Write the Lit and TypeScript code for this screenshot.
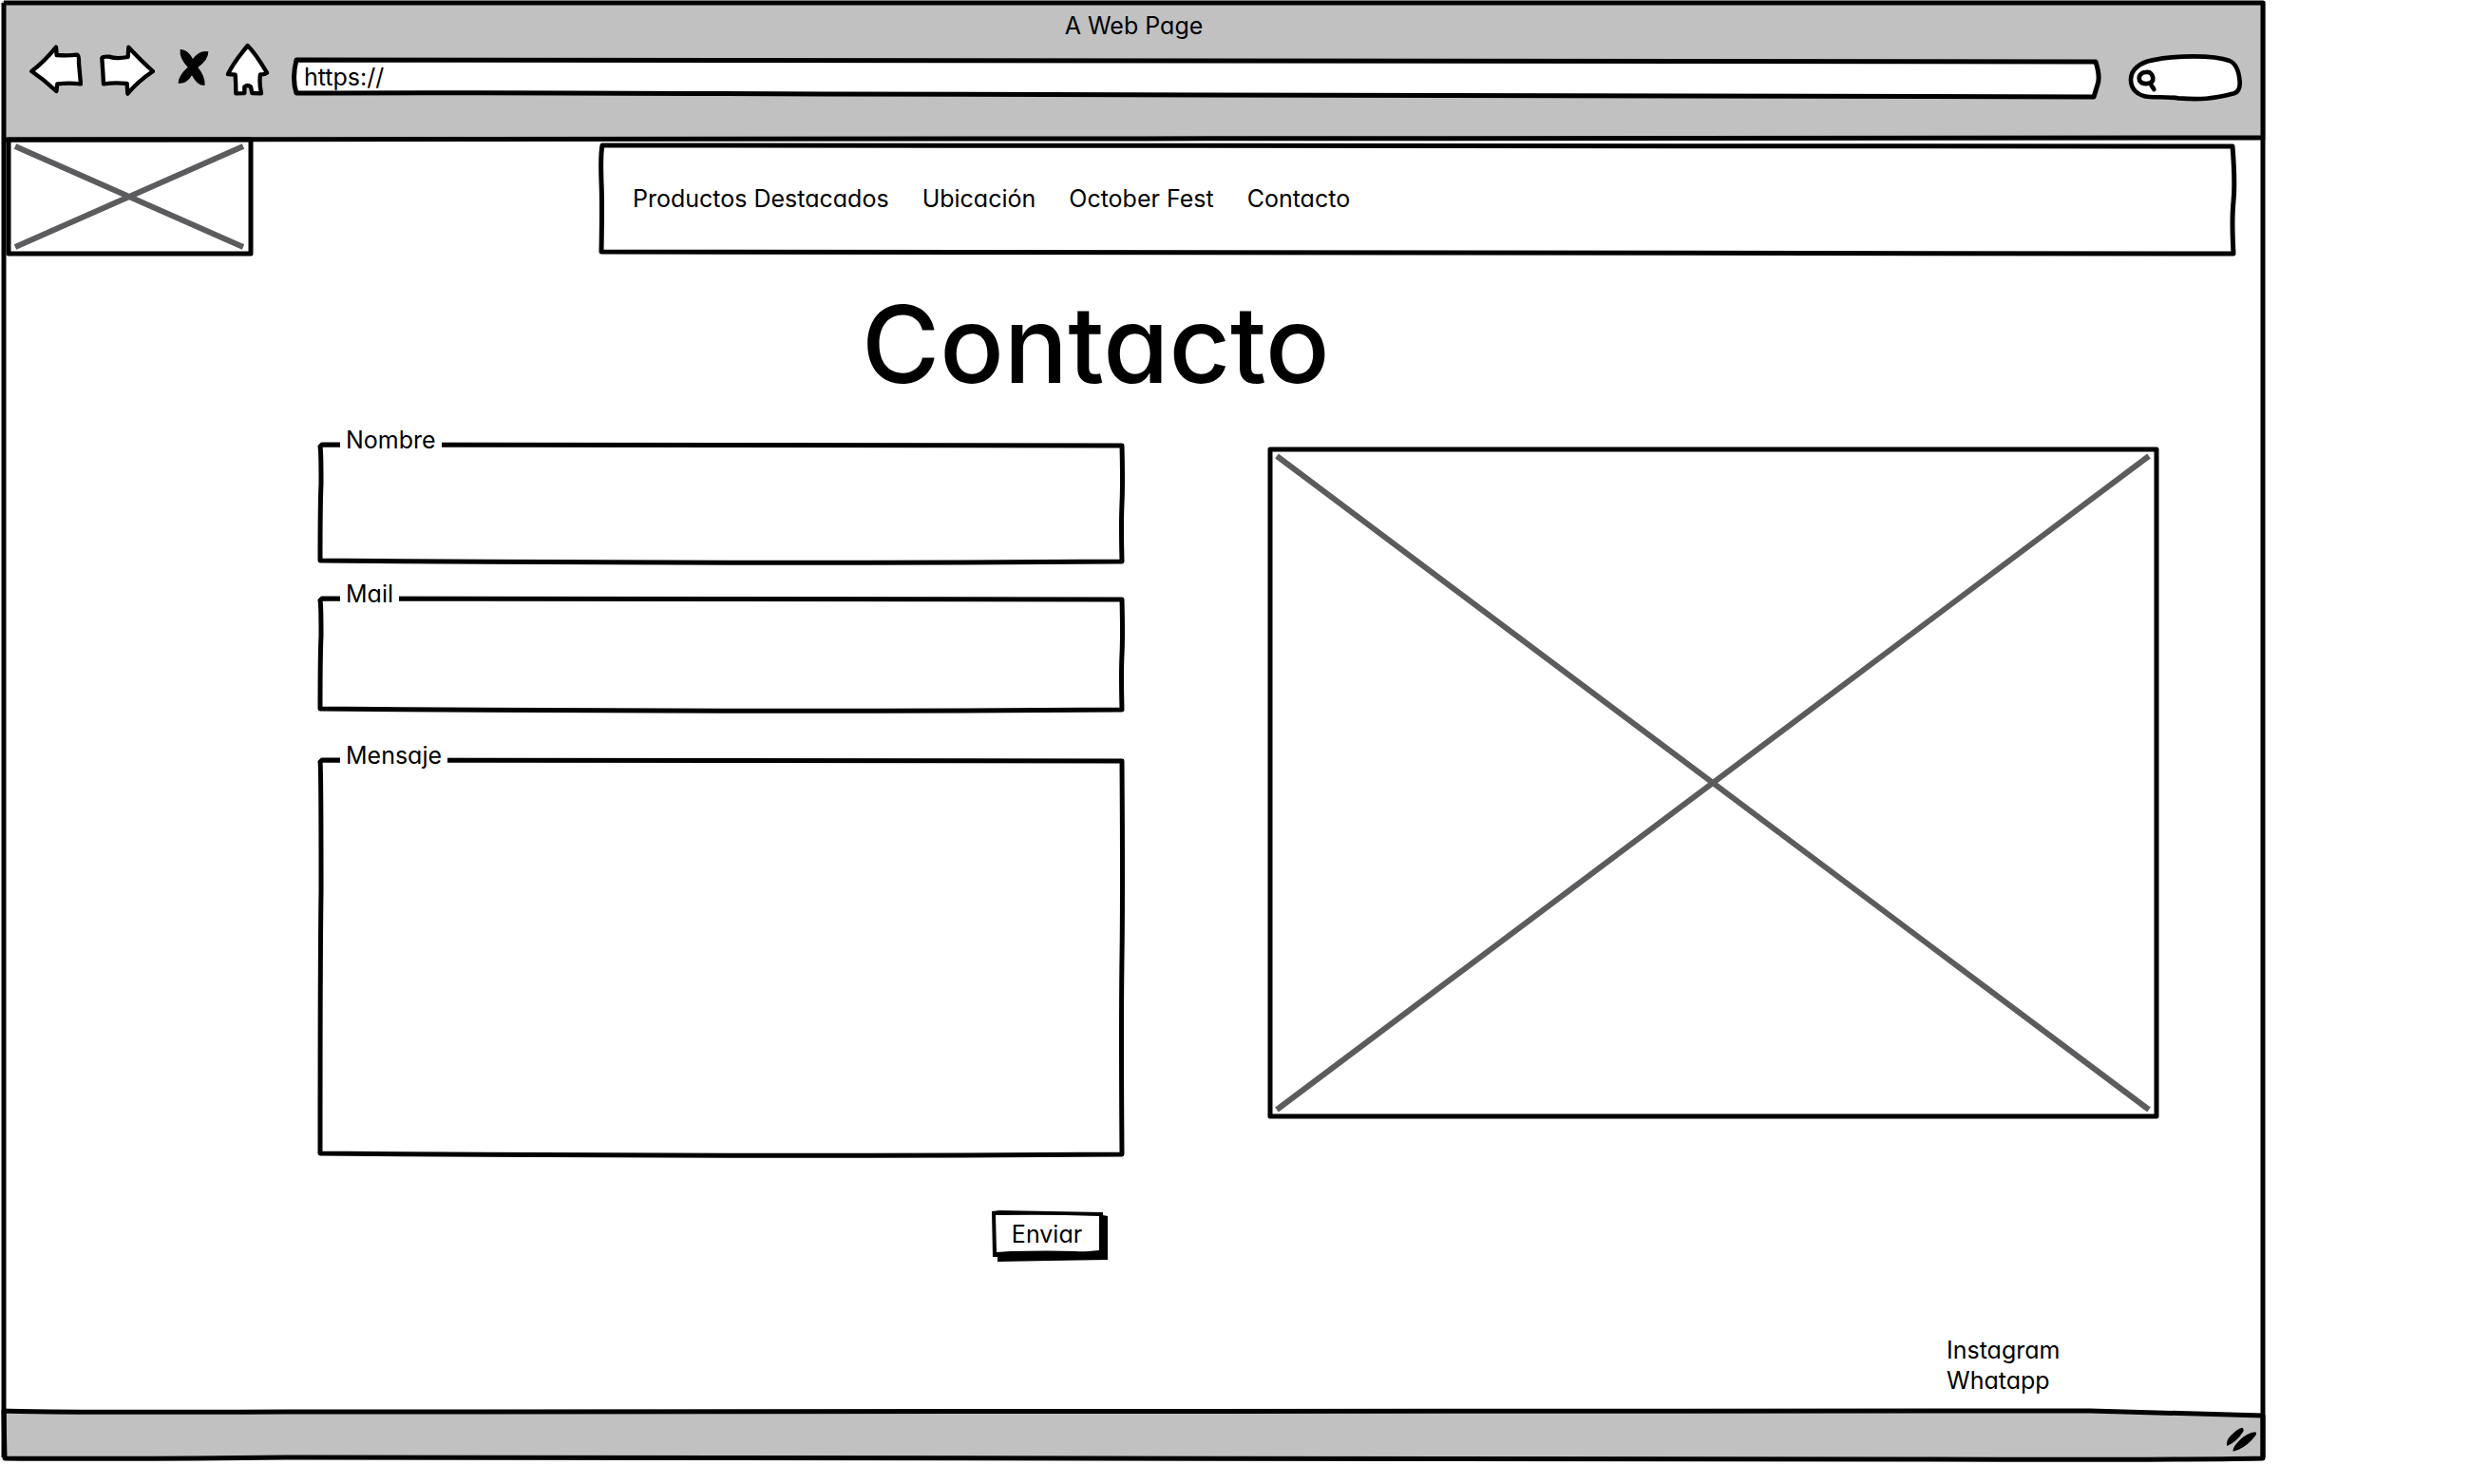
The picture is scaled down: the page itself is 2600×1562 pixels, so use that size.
import { LitElement, html, css, svg } from "lit";
import { customElement } from "lit/decorators.js";

/* Hand-drawn outline that stretches over its positioned parent. */
const ink = (w: number, h: number, d: string, fill = "none") => html`
  <svg class="ink" viewBox="0 0 ${w} ${h}" preserveAspectRatio="none" aria-hidden="true">
    <path d=${d} fill=${fill} vector-effect="non-scaling-stroke"></path>
  </svg>
`;

const fieldOutline = (h: number) =>
  ink(848, h, `M4 1 Q420 0 846 2 Q847 ${h / 3} 846 ${h / 2} T846 ${h - 2} Q420 ${h + 1} 2 ${h - 3} Q2 ${h / 2} 3 ${h / 3} Q3 7 2 3Z`);

const crossed = (w: number, h: number) => html`
  <svg class="ink" viewBox="0 0 ${w} ${h}" preserveAspectRatio="none" aria-hidden="true">
    ${svg`<path class="cross" d="M9 9 L${w - 10} ${h - 9} M${w - 10} 9 L9 ${h - 9}" vector-effect="non-scaling-stroke"></path>
    <path d="M2 2 H${w - 2} V${h - 2} H2Z" fill="none" vector-effect="non-scaling-stroke"></path>`}
  </svg>
`;

@customElement("app-root")
export class AppRoot extends LitElement {
  static styles = css`
    :host {
      display: block;
      background: #fff;
      color: #000;
      font: 400 25px/32px Inter, "Liberation Sans", sans-serif;
      font-feature-settings: "cv11" 1, "ss03" 1;
    }
    * { box-sizing: border-box; }
    .ink {
      position: absolute;
      inset: 0;
      width: 100%;
      height: 100%;
      overflow: visible;
      pointer-events: none;
      stroke: #000;
      stroke-width: 5px;
      stroke-linejoin: round;
    }
    .cross { stroke: #5c5c5e; stroke-width: 6px; }
    .window { position: relative; margin: 1px 215px 24px 2px; }
    .bar {
      background: #c1c1c1;
      height: 146px;
      padding-top: 10px;
      display: flex;
      flex-direction: column;
    }
    .title { text-align: center; margin: 0; font-size: inherit; font-weight: inherit; }
    .tools {
      display: flex;
      align-items: flex-start;
      padding: 4px 23px 0 29px;
    }
    .tool { border: 0; padding: 0; margin: 0; background: none; display: block; height: 54px; }
    .tool svg { display: block; }
    .back { margin-right: 18px; }
    .next { margin-right: 24px; }
    .stop { margin-right: 18px; }
    .home { margin-right: 25px; }
    .address { position: relative; flex: 1; height: 44px; margin: 14px 28px 0 0; }
    .address input, .field input, .field textarea {
      position: relative;
      display: block;
      width: 100%;
      height: 100%;
      border: 0;
      outline: 0;
      background: none;
      font: inherit;
      color: inherit;
      resize: none;
    }
    .address input { padding: 0 12px 4px; }
    .search { position: relative; width: 122px; height: 54px; margin-top: 8px; }
    .search svg { display: block; }
    .search input {
      position: absolute;
      inset: 8px 12px 8px 32px;
      width: 78px;
      border: 0;
      outline: 0;
      background: none;
      font: inherit;
    }
    .top { display: flex; align-items: flex-start; padding: 0 31px 0 5px; gap: 365px; }
    .logo { position: relative; width: 259px; height: 124px; margin-top: -2px; }
    nav {
      position: relative;
      flex: 1;
      height: 117px;
      margin-top: 5px;
      padding: 0 35px 4px;
      display: flex;
      align-items: center;
      gap: 35px;
    }
    nav a, .social a { position: relative; color: inherit; text-decoration: none; }
    h1 {
      margin: 29px 0 0 905px;
      font-size: 112px;
      line-height: 128px;
      font-weight: 500;
    }
    .content {
      display: grid;
      grid-template-columns: 848fr 937fr;
      column-gap: 152px;
      padding: 41px 113px 0 333px;
      align-items: start;
    }
    form { display: flex; flex-direction: column; }
    .field { position: relative; height: 126px; }
    .mail { height: 120px; margin-top: 36px; }
    .message { height: 418px; margin-top: 50px; }
    .field label {
      position: absolute;
      left: 23px;
      top: -20px;
      padding: 0 6px;
      background: #fff;
      z-index: 1;
    }
    .field input, .field textarea { padding: 16px 24px; }
    .send {
      position: relative;
      align-self: flex-end;
      width: 122px;
      height: 54px;
      margin: 57px 17px 0 0;
      padding: 0 6px 4px 0;
      border: 0;
      background: none;
      font: inherit;
      font-feature-settings: inherit;
      color: inherit;
    }
    .send span { position: relative; }
    .photo { position: relative; aspect-ratio: 937 / 706; margin-top: 4px; }
    .social {
      display: flex;
      flex-direction: column;
      align-items: flex-start;
      width: 336px;
      margin: 77px 0 0 auto;
      padding-bottom: 16px;
    }
    .foot { position: relative; height: 52px; }
    .grip { position: absolute; right: 8px; top: 17px; }
  `;

  render() {
    return html`
      <div class="window">
        <header class="bar">
          <p class="title">A Web Page</p>
          <div class="tools">
            <button class="tool back" aria-label="Back">
              <svg width="56" height="54" viewBox="93 141 168 162">
                <path d="M100 225 Q140 195 177 149 L179 174 Q215 177 244 173 Q250 176 249 200 L255 265 Q218 261 181 265 L178 288 Q140 252 100 225Z" fill="#fff" stroke="#000" stroke-width="13" stroke-linejoin="round"></path>
              </svg>
            </button>
            <button class="tool next" aria-label="Forward">
              <svg width="58" height="54" viewBox="316 141 174 162">
                <path d="M323 183 Q326 178 345 179 Q370 187 405 180 L407 149 Q448 193 484 225 Q435 258 404 296 L402 264 Q365 260 328 265 Q326 225 323 183Z" fill="#fff" stroke="#000" stroke-width="13" stroke-linejoin="round"></path>
              </svg>
            </button>
            <button class="tool stop" aria-label="Stop">
              <svg width="33" height="54" viewBox="562 141 99 162">
                <path d="M570 156 Q592 154 610 186 Q632 156 659 163 Q660 188 626 213 Q648 238 648 269 Q626 274 607 238 Q590 266 564 263 Q564 238 594 212 Q566 184 570 156Z"></path>
              </svg>
            </button>
            <button class="tool home" aria-label="Home">
              <svg width="45" height="54" viewBox="712 141 135 162" overflow="visible">
                <path d="M780 144 Q806 170 841 230 Q834 236 820 235 Q816 262 823 295 L794 294 L790 274 Q780 266 770 274 L770 294 L743 295 Q743 262 741 236 L718 234 Q734 200 780 144Z" fill="#fff" stroke="#000" stroke-width="13" stroke-linejoin="round"></path>
              </svg>
            </button>
            <div class="address">
              ${ink(1904, 44, "M4 2 Q950 1 1898 4 Q1903 20 1900 28 L1896 41 Q950 40 560 38 T4 37 Q-1 22 4 2Z", "#fff")}
              <input type="text" aria-label="Address" value="https://">
            </div>
            <div class="search">
              <svg width="122" height="54" viewBox="181 165 366 162" aria-hidden="true">
                <path d="M190 250 C191 222 215 198 258 190 C330 175 450 173 502 192 C524 202 532 232 534 258 C535 276 532 290 516 295 C450 313 405 315 340 310 C300 305 275 308 250 306 C210 304 189 280 190 250Z" fill="#fff" stroke="#000" stroke-width="14"></path>
                <path d="M237 228 C254 225 262 240 259 255 C251 267 226 268 218 255 C212 240 222 229 237 228Z M250 262 L263 282" fill="none" stroke="#000" stroke-width="14" stroke-linecap="round"></path>
              </svg>
              <input type="search" aria-label="Search">
            </div>
          </div>
        </header>

        <main>
          <div class="top">
            <div class="logo" role="img" aria-label="Logo">${crossed(259, 124)}</div>
            <nav>
              ${ink(1724, 117, "M3 1 Q860 1 1720 2 Q1723 40 1721 60 T1721 115 Q900 116 2 113 Q3 60 2 40 Q1 10 3 1Z", "#fff")}
              <a href="#productos">Productos Destacados</a>
              <a href="#ubicacion">Ubicación</a>
              <a href="#october-fest">October Fest</a>
              <a href="#contacto">Contacto</a>
            </nav>
          </div>

          <h1>Contacto</h1>

          <div class="content">
            <form @submit=${(e: Event) => e.preventDefault()}>
              <div class="field">
                ${fieldOutline(126)}
                <label for="nombre">Nombre</label>
                <input id="nombre" type="text">
              </div>
              <div class="field mail">
                ${fieldOutline(120)}
                <label for="mail">Mail</label>
                <input id="mail" type="email">
              </div>
              <div class="field message">
                ${fieldOutline(418)}
                <label for="mensaje">Mensaje</label>
                <textarea id="mensaje"></textarea>
              </div>
              <button class="send" type="submit">
                <svg class="ink" viewBox="0 0 122 54" preserveAspectRatio="none" aria-hidden="true">
                  <path d="M0 1 L8 0 L117 2 V5 L122 6 V52 L60 53 L6 54 V49 H1Z" stroke="none"></path>
                  <path d="M4 5 Q60 4 113 6 V42 Q95 44 88 43 Q60 42 20 43 L5 44Z" fill="#fff" stroke="none"></path>
                </svg>
                <span>Enviar</span>
              </button>
            </form>
            <div class="photo" role="img" aria-label="Imagen">${crossed(937, 706)}</div>
          </div>

          <div class="social">
            <a href="#instagram">Instagram</a>
            <a href="#whatsapp">Whatapp</a>
          </div>
        </main>

        <footer class="foot">
          ${ink(2383, 52, "M2 0 Q60 2 300 1 T2198 0 Q2300 3 2380 5 V50 Q2280 52 2000 51 Q600 48 300 49 Q100 51 3 50Z", "#c1c1c1")}
          <svg class="grip" width="34" height="28" viewBox="1027 364 102 84" aria-hidden="true">
            <path d="M1031 424 Q1026 408 1042 392 Q1062 370 1078 366 Q1085 368 1082 378 Q1062 410 1031 424Z M1050 441 Q1048 428 1068 408 Q1094 382 1120 380 Q1126 382 1120 392 Q1090 432 1050 441Z"></path>
          </svg>
        </footer>
        ${ink(2383, 1537, "M2 2 H2380 V1534 M2 2 Q1 700 2 1534 M2 146 Q500 145 1200 145 T2380 144")}
      </div>
    `;
  }
}
